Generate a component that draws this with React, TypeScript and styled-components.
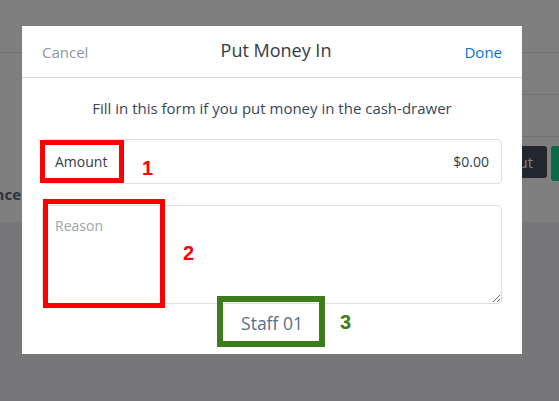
import React from "react";
import styled, { createGlobalStyle } from "styled-components";

const Global = createGlobalStyle`
  html, body { margin: 0; padding: 0; }
  body { font-family: "Open Sans", "Noto Sans", sans-serif; background: #fff; }
  * { box-sizing: border-box; }
`;

const Page = styled.div`
  width: 100vw;
  height: 100vh;
  overflow: hidden;
  display: flex;
  flex-direction: column;
  background: #fff;
`;

const TopBar = styled.div`
  height: 53px;
  flex: none;
  border-bottom: 1px solid #e6e6e6;
`;

const Content = styled.div`
  height: 169px;
  flex: none;
  display: flex;
`;

const LeftPane = styled.div`
  width: 21px;
  flex: none;
  display: flex;
  justify-content: flex-end;
  align-items: flex-start;
  padding-top: 131px;
`;

const SideLabel = styled.div`
  font-weight: 700;
  font-size: 15px;
  line-height: 20px;
  white-space: nowrap;
  color: #5b6578;
`;

const RightPane = styled.div`
  flex: 1;
  display: flex;
  flex-direction: column;
`;

const Row = styled.div`
  height: 42px;
  border-bottom: 1px solid #e6e6e6;
`;

const Actions = styled.div`
  display: flex;
  justify-content: flex-end;
  gap: 4px;
  padding-top: 9px;
  margin-right: -52px;
`;

const PageButton = styled.div<{ $tone: "dark" | "green" }>`
  height: ${(p) => (p.$tone === "dark" ? 32 : 35)}px;
  width: ${(p) => (p.$tone === "dark" ? "auto" : "60px")};
  padding: 0 14px;
  overflow: hidden;
  border-radius: 3px;
  display: flex;
  align-items: center;
  justify-content: ${(p) => (p.$tone === "dark" ? "center" : "flex-start")};
  font-size: 15px;
  white-space: nowrap;
  color: #fff;
  background: ${(p) => (p.$tone === "dark" ? "#444d5d" : "#1bd48e")};
`;

const LowerBand = styled.div`
  flex: 1;
  background: #eeeef4;
`;

const Overlay = styled.div`
  position: fixed;
  inset: 0;
  background: rgba(0, 0, 0, 0.5);
  padding: 26px 0 0 22px;
`;

const Modal = styled.div`
  position: relative;
  width: 500px;
  height: 328px;
  background: #fff;
  display: flex;
  flex-direction: column;
`;

const Header = styled.div`
  height: 52px;
  flex: none;
  border-bottom: 1px solid #dcdcdc;
  display: grid;
  grid-template-columns: 1fr auto 1fr;
  align-items: center;
  padding: 0 20px;
`;

const HeaderLink = styled.span<{ $primary?: boolean; $align: "left" | "right" }>`
  font-size: 15px;
  line-height: 20px;
  padding-top: 1px;
  color: ${(p) => (p.$primary ? "#0a6fd9" : "#8b979d")};
  text-align: ${(p) => p.$align};
`;

const Title = styled.h1`
  margin: 0 0 0 8px;
  padding-bottom: 3px;
  font-size: 18px;
  font-weight: 400;
  line-height: 22px;
  color: #333b45;
`;

const Body = styled.div`
  flex: 1;
  display: flex;
  flex-direction: column;
  padding: 20px 20px 0;
`;

const Subtitle = styled.p`
  margin: 0;
  text-align: center;
  font-size: 15px;
  line-height: 21px;
  color: #3a4656;
`;

const AmountField = styled.label`
  margin-top: 20px;
  height: 45px;
  border: 1px solid #e0e0e0;
  border-radius: 4px;
  display: flex;
  align-items: center;
  padding: 0 12px;
  font-size: 14px;
  color: #333d4a;
`;

const AmountInput = styled.input`
  flex: 1;
  border: none;
  outline: none;
  text-align: right;
  font: inherit;
  color: #333d4a;
  background: transparent;
  padding: 0;
  min-width: 0;
`;

const Reason = styled.textarea`
  margin-top: 21px;
  height: 99px;
  border: 1px solid #e0e0e0;
  border-radius: 4px;
  padding: 10px 12px;
  font-family: inherit;
  font-size: 14px;
  line-height: 20px;
  color: #333d4a;
  resize: vertical;
  outline: none;
  &::placeholder { color: #9da4a8; }
`;

const Staff = styled.div`
  margin-top: 7px;
  text-align: center;
  font-size: 17.5px;
  line-height: 24px;
  color: #5a6c88;
`;

const Marker = styled.div<{ $color: string; $w: number; $l: number; $t: number; $wd: number; $h: number }>`
  position: absolute;
  left: ${(p) => p.$l}px;
  top: ${(p) => p.$t}px;
  width: ${(p) => p.$wd}px;
  height: ${(p) => p.$h}px;
  border: ${(p) => p.$w}px solid ${(p) => p.$color};
`;

const MarkerNumber = styled.span<{ $color: string; $l: number; $t: number }>`
  position: absolute;
  left: ${(p) => p.$l}px;
  top: ${(p) => p.$t}px;
  font-family: "Liberation Sans", Arial, sans-serif;
  font-weight: 700;
  font-size: 20px;
  line-height: 20px;
  color: ${(p) => p.$color};
`;

const RED = "#ff0000";
const GREEN = "#3e7b1b";

export default function App() {
  return (
    <>
      <Global />
      <Page>
        <TopBar />
        <Content>
          <LeftPane>
            <SideLabel>Balance</SideLabel>
          </LeftPane>
          <RightPane>
            <Row />
            <Row />
            <Actions>
              <PageButton $tone="dark">Cash Out</PageButton>
              <PageButton $tone="green">Cash In</PageButton>
            </Actions>
          </RightPane>
        </Content>
        <LowerBand />
      </Page>
      <Overlay>
        <Modal>
          <Header>
            <HeaderLink $align="left">Cancel</HeaderLink>
            <Title>Put Money In</Title>
            <HeaderLink $align="right" $primary>
              Done
            </HeaderLink>
          </Header>
          <Body>
            <Subtitle>Fill in this form if you put money in the cash-drawer</Subtitle>
            <AmountField>
              <span>Amount</span>
              <AmountInput readOnly value="$0.00" />
            </AmountField>
            <Reason placeholder="Reason" />
            <Staff>Staff 01</Staff>
          </Body>
          <Marker $color={RED} $w={5} $l={18} $t={114} $wd={84} $h={43} />
          <MarkerNumber $color={RED} $l={120} $t={132}>1</MarkerNumber>
          <Marker $color={RED} $w={5} $l={21} $t={173} $wd={122} $h={109} />
          <MarkerNumber $color={RED} $l={161} $t={217}>2</MarkerNumber>
          <Marker $color={GREEN} $w={6} $l={195} $t={270} $wd={108} $h={51} />
          <MarkerNumber $color={GREEN} $l={318} $t={286}>3</MarkerNumber>
        </Modal>
      </Overlay>
    </>
  );
}
